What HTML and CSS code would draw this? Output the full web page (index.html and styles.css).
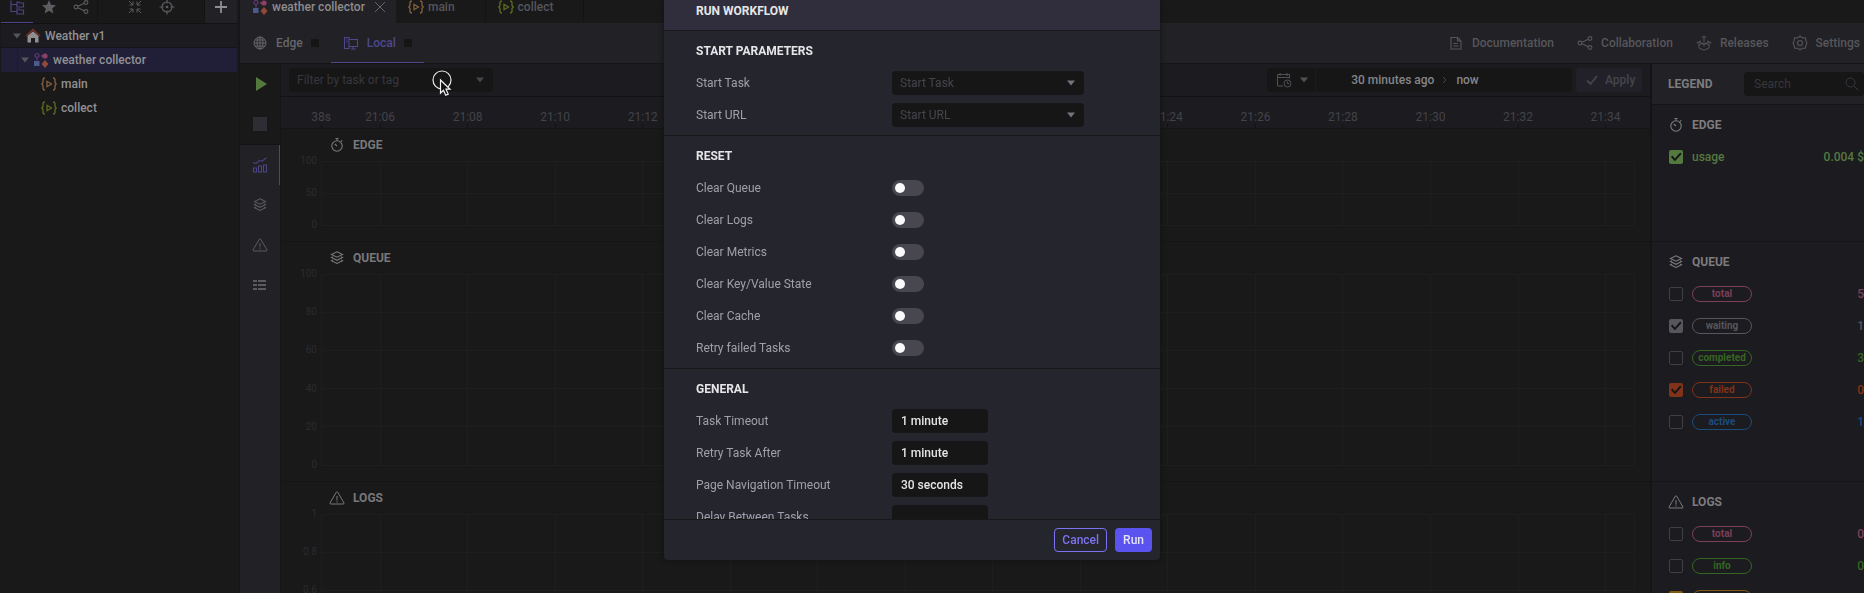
FILE: index.html
```html
<!DOCTYPE html>
<html lang="en">
<head>
<meta charset="utf-8">
<title>Weather v1 – weather collector</title>
<link rel="stylesheet" href="styles.css">
</head>
<body>
<svg class="defs" aria-hidden="true">
  <symbol id="i-flow" viewBox="0 0 16 16">
    <circle cx="4" cy="3.500" r="2" fill="none" stroke="#603a74" stroke-width="1.200"/>
    <path d="M4 5.500v3" stroke="#603a74" stroke-width="1.200"/>
    <path d="M8 4h3" stroke="#8a4068" stroke-width="1.200"/>
    <circle cx="12" cy="4" r="2.600" fill="#8a4068"/>
    <path d="M1 9h5.500v5H1z" fill="#4a5a8c"/>
    <path d="M12 8l3.500 4-3.500 4-3.500-4z" fill="#92493a"/>
  </symbol>
  <symbol id="i-code" viewBox="0 0 16 14">
    <path d="M4 1Q2 1 2 3v2.500L.8 7 2 8.500V11q0 2 2 2M12 1q2 0 2 2v2.500L15.200 7 14 8.500V11q0 2-2 2M6 4.300v5.400L10.500 7z" fill="none" stroke="currentColor" stroke-width="1.300"/>
  </symbol>
  <symbol id="i-share" viewBox="0 0 16 16">
    <g fill="none" stroke="currentColor" stroke-width="1.100"><circle cx="3" cy="8" r="1.900"/><circle cx="13" cy="3.500" r="1.900"/><circle cx="13" cy="12.500" r="1.900"/><path d="M5 7.200l6.200-2.900M5 8.800l6.200 2.900"/></g>
  </symbol>
  <symbol id="i-watch" viewBox="0 0 16 16">
    <g fill="none" stroke="currentColor" stroke-width="1.100"><circle cx="8" cy="9" r="5.200"/><path d="M6.500 1.500h3M8 1.500v2.300M12 4.500l1.300-1.200M8 9L5.800 7"/></g>
  </symbol>
  <symbol id="i-stack" viewBox="0 0 16 16">
    <path d="M8 1.800l5.500 2.700L8 7.200 2.500 4.500zM4 6.800l-1.500.8L8 10.300l5.500-2.700-1.500-.8M4 9.900l-1.500.8L8 13.400l5.500-2.700-1.500-.8" fill="none" stroke="currentColor" stroke-width="1.100"/>
  </symbol>
  <symbol id="i-warn" viewBox="0 0 16 16">
    <path d="M7.300 2.200Q8 1.300 8.700 2.200L15 13q.2 1-.8 1H1.800q-1 0-.8-1zM8 6v4.500M8 11.300v1.200" fill="none" stroke="currentColor" stroke-width="1"/>
  </symbol>
  <symbol id="i-caret" viewBox="0 0 8 6"><path d="M0 .5h8L4 5.500z" fill="currentColor"/></symbol>
</svg>

<div class="app">
  <aside class="sidebar">
    <div class="side-tools">
      <button class="tool tool-active" aria-label="Tree"><svg class="icon" viewBox="0 0 16 16"><path d="M2 1.500v11h6M2 5.500h6M8 3h2l1 1h3.500v4H8zM8 10h2l1 1h3.500v4H8z" fill="none" stroke="currentColor" stroke-width="1.200"/></svg></button>
      <button class="tool" aria-label="Favourites"><svg class="icon" viewBox="0 0 16 16"><path d="M8 1l2 4.800 5 .4-3.800 3.300 1.200 5L8 11.800 3.600 14.500l1.200-5L1 6.200l5-.4z" fill="currentColor"/></svg></button>
      <button class="tool" aria-label="Share"><svg class="icon"><use href="#i-share"/></svg></button>
      <div class="tool-group">
        <button class="tool" aria-label="Collapse"><svg class="icon" viewBox="0 0 16 16"><path d="M2 2l4 4M6 2.500V6H2.500M14 2l-4 4M10 2.500V6h3.500M2 14l4-4M2.500 10H6v3.500M14 14l-4-4M13.500 10H10v3.500" fill="none" stroke="currentColor"/></svg></button>
        <button class="tool" aria-label="Locate"><svg class="icon" viewBox="0 0 16 16"><g fill="none" stroke="currentColor" stroke-width="1.200"><circle cx="8" cy="8" r="5"/><path d="M8 .5v4M8 11.500v4M.5 8h4M11.500 8h4"/></g><circle cx="8" cy="8" r="1.300" fill="currentColor"/></svg></button>
      </div>
      <button class="tool tool-add" aria-label="Add"><svg class="icon" viewBox="0 0 16 16"><path d="M8 2v12M2 8h12" stroke="currentColor" stroke-width="1.800"/></svg></button>
    </div>
    <ul class="tree">
      <li class="node node-root"><svg class="caret"><use href="#i-caret"/></svg><svg class="icon" viewBox="0 0 16 16"><path d="M2.500 8L8 3.200 13.500 8v6.500H10V10H6v4.500H2.500z" fill="#8f8f91"/><path d="M1 8l7-6.500L15 8" fill="none" stroke="#7a3426" stroke-width="1.400"/></svg>Weather v1</li>
      <li class="node node-selected"><svg class="caret"><use href="#i-caret"/></svg><svg class="icon"><use href="#i-flow"/></svg>weather collector</li>
      <li class="node node-leaf"><svg class="icon orange"><use href="#i-code"/></svg>main</li>
      <li class="node node-leaf"><svg class="icon olive"><use href="#i-code"/></svg>collect</li>
    </ul>
  </aside>

  <main class="workspace">
    <nav class="tabs">
      <button class="tab tab-active"><svg class="icon"><use href="#i-flow"/></svg>weather collector<svg class="icon close" viewBox="0 0 16 16"><path d="M3 3l10 10M13 3L3 13" stroke="currentColor"/></svg></button>
      <button class="tab"><svg class="icon orange"><use href="#i-code"/></svg>main</button>
      <button class="tab"><svg class="icon olive"><use href="#i-code"/></svg>collect</button>
    </nav>
    <div class="subbar">
      <button class="env"><svg class="icon" viewBox="0 0 16 16"><g fill="none" stroke="currentColor"><circle cx="8" cy="8" r="6"/><ellipse cx="8" cy="8" rx="3" ry="6"/><path d="M8 2v12M2 8h12M3 5h10M3 11h10"/></g></svg>Edge<i class="dot"></i></button>
      <button class="env env-active"><svg class="icon" viewBox="0 0 16 16"><path d="M1.500 2.500h4.500v11H1.500zM3 5h1.500M3 7h1.500M6 4.500h8.500v7H6M10 11.500v2.500M8 14h5" fill="none" stroke="currentColor" stroke-width="1.100"/></svg>Local<i class="dot"></i></button>
      <div class="links">
        <a class="link" href="#docs"><svg class="icon" viewBox="0 0 16 16"><path d="M3 2.500h6.500L13 6v8H3zM9.500 2.500V6H13M5.500 8.500h4M5.500 11h5" fill="none" stroke="currentColor" stroke-width="1.100"/></svg>Documentation</a>
        <a class="link" href="#collab"><svg class="icon"><use href="#i-share"/></svg>Collaboration</a>
        <a class="link" href="#releases"><svg class="icon" viewBox="0 0 16 16"><path d="M8 7V1M5.700 3L8 .8 10.300 3M5 6L1 7.500l2 2 5-1.500 5 1.500 2-2L11 6M3 9.500v3.500l5 2.300 5-2.300V9.500M3 7l5 2.500L13 7M8 9.500v2" fill="none" stroke="currentColor"/></svg>Releases</a>
        <a class="link" href="#settings"><svg class="icon" viewBox="0 0 16 16"><path d="M8 1l2 1.800 3.300.1.700 3L15 8l-1 2.100-.7 3-3.300.1L8 15l-2-1.800-3.300-.1-.7-3L1 8l1-2.100.7-3L6 2.800z" fill="none" stroke="currentColor" stroke-width="1.100"/><circle cx="8" cy="8" r="2.500" fill="none" stroke="currentColor" stroke-width="1.100"/></svg>Settings</a>
      </div>
    </div>

    <div class="content">
      <div class="rail">
        <div class="rail-run">
          <button class="rail-btn green" aria-label="Run"><svg class="icon" viewBox="0 0 16 16"><path d="M4 1l11 7-11 7z" fill="currentColor"/></svg></button>
          <button class="rail-btn stop" aria-label="Stop"><svg class="icon" viewBox="0 0 16 16"><path d="M1 1h14v14H1z" fill="currentColor"/></svg></button>
        </div>
        <button class="rail-btn rail-active" aria-label="Charts"><svg class="icon" viewBox="0 0 16 16"><path d="M1.500 11h3v4h-3zM6.500 9h3v6h-3zM11.500 8h3v7h-3zM1 5.500l3 1 3.500-3L10 4.200 14.500.8" fill="none" stroke="currentColor" stroke-width="1.100"/></svg></button>
        <button class="rail-btn" aria-label="Queue"><svg class="icon"><use href="#i-stack"/></svg></button>
        <button class="rail-btn" aria-label="Logs"><svg class="icon"><use href="#i-warn"/></svg></button>
        <button class="rail-btn" aria-label="List"><svg class="icon" viewBox="0 0 16 16"><path d="M1 4h4M6 4h8M1 8h4M6 8h8M1 12h4M6 12h8" stroke="currentColor" stroke-width="2"/></svg></button>
      </div>

      <section class="charts">
        <div class="filterbar">
          <label class="filter"><input class="filter-input" type="text" placeholder="Filter by task or tag" aria-label="Filter by task or tag"><svg class="caret"><use href="#i-caret"/></svg>
            <svg class="cursor" viewBox="0 0 24 30"><circle cx="11" cy="11" r="9" fill="none" stroke="#e8e8e8" stroke-width="1.200"/><path d="M9.500 11v13l3-2.800 2.200 5 2.500-1.100-2.200-4.900h4z" fill="#111" stroke="#f4f4f4" stroke-width="1.200"/></svg>
          </label>
          <div class="range">
            <button class="range-pick" aria-label="Pick range"><svg class="icon" viewBox="0 0 16 16"><path d="M7 14H1.500V2.500h12v4M1.500 5.500h12M4 1v3M11 1v3" fill="none" stroke="currentColor"/><circle cx="11.500" cy="11.500" r="3.500" fill="none" stroke="currentColor"/><path d="M11.500 9.500v2h1.800" fill="none" stroke="currentColor"/></svg><svg class="caret"><use href="#i-caret"/></svg></button>
            <button class="range-text">30 minutes ago<svg class="chev" viewBox="0 0 6 8"><path d="M1 1l3 3-3 3" fill="none" stroke="currentColor"/></svg>now</button>
          </div>
          <button class="apply"><svg class="icon" viewBox="0 0 16 16"><path d="M3 8.500l3.500 3.500L13 4" fill="none" stroke="currentColor" stroke-width="1.800"/></svg>Apply</button>
        </div>
        <svg class="axis">
          <g class="axis-ticks">
            <line x1="0" x2="0" y1="27" y2="31"/><line x1="4.500%" x2="4.500%" y1="27" y2="31"/><line x1="11.170%" x2="11.170%" y1="27" y2="31"/><line x1="17.830%" x2="17.830%" y1="27" y2="31"/><line x1="24.500%" x2="24.500%" y1="27" y2="31"/><line x1="64.500%" x2="64.500%" y1="27" y2="31"/><line x1="71.170%" x2="71.170%" y1="27" y2="31"/><line x1="77.830%" x2="77.830%" y1="27" y2="31"/><line x1="84.500%" x2="84.500%" y1="27" y2="31"/><line x1="91.170%" x2="91.170%" y1="27" y2="31"/><line x1="97.830%" x2="97.830%" y1="27" y2="31"/>
          </g>
          <g class="axis-text">
            <text x="0" y="24">38s</text><text x="4.500%" y="24">21:06</text><text x="11.170%" y="24">21:08</text><text x="17.830%" y="24">21:10</text><text x="24.500%" y="24">21:12</text><text x="64.500%" y="24">21:24</text><text x="71.170%" y="24">21:26</text><text x="77.830%" y="24">21:28</text><text x="84.500%" y="24">21:30</text><text x="91.170%" y="24">21:32</text><text x="97.830%" y="24">21:34</text>
          </g>
        </svg>

        <article class="chart">
          <h2 class="chart-title"><svg class="icon"><use href="#i-watch"/></svg>EDGE</h2>
          <div class="plot plot-short">
            <div class="scale"><span>100</span><span>50</span><span>0</span></div>
            <svg class="grid"><g id="cols"><line x1="0" x2="0" y2="100%"/><line x1="4.500%" x2="4.500%" y2="100%"/><line x1="11.170%" x2="11.170%" y2="100%"/><line x1="17.830%" x2="17.830%" y2="100%"/><line x1="24.500%" x2="24.500%" y2="100%"/><line x1="31.170%" x2="31.170%" y2="100%"/><line x1="37.830%" x2="37.830%" y2="100%"/><line x1="44.500%" x2="44.500%" y2="100%"/><line x1="51.170%" x2="51.170%" y2="100%"/><line x1="57.830%" x2="57.830%" y2="100%"/><line x1="64.500%" x2="64.500%" y2="100%"/><line x1="71.170%" x2="71.170%" y2="100%"/><line x1="77.830%" x2="77.830%" y2="100%"/><line x1="84.500%" x2="84.500%" y2="100%"/><line x1="91.170%" x2="91.170%" y2="100%"/><line x1="97.830%" x2="97.830%" y2="100%"/><line x1="100%" x2="100%" y2="100%"/></g>
              <line x2="100%" y1="0" y2="0"/><line x2="100%" y1="50%" y2="50%"/><line x2="100%" y1="100%" y2="100%"/></svg>
          </div>
        </article>
        <article class="chart">
          <h2 class="chart-title"><svg class="icon"><use href="#i-stack"/></svg>QUEUE</h2>
          <div class="plot">
            <div class="scale"><span>100</span><span>80</span><span>60</span><span>40</span><span>20</span><span>0</span></div>
            <svg class="grid"><use href="#cols"/><g id="rows"><line x2="100%" y1="0" y2="0"/><line x2="100%" y1="20%" y2="20%"/><line x2="100%" y1="40%" y2="40%"/><line x2="100%" y1="60%" y2="60%"/><line x2="100%" y1="80%" y2="80%"/><line x2="100%" y1="100%" y2="100%"/></g></svg>
          </div>
        </article>
        <article class="chart">
          <h2 class="chart-title"><svg class="icon"><use href="#i-warn"/></svg>LOGS</h2>
          <div class="plot">
            <div class="scale"><span>1</span><span>0.8</span><span>0.6</span><span>0.4</span><span>0.2</span><span>0</span></div>
            <svg class="grid"><use href="#cols"/><use href="#rows"/></svg>
          </div>
        </article>
      </section>

      <aside class="legend">
        <header class="legend-head"><h2 class="legend-title">LEGEND</h2><label class="search"><input class="search-input" type="search" placeholder="Search" aria-label="Search"><svg class="icon" viewBox="0 0 16 16"><circle cx="6.500" cy="6.500" r="4.500" fill="none" stroke="currentColor"/><path d="M10 10l4.500 4.500" stroke="currentColor"/></svg></label></header>
        <section class="group group-short">
          <h3 class="group-title"><svg class="icon"><use href="#i-watch"/></svg>EDGE</h3>
          <label class="entry green"><input class="check" type="checkbox" checked><span>usage</span><output class="value">0.004 $</output></label>
        </section>
        <section class="group">
          <h3 class="group-title"><svg class="icon"><use href="#i-stack"/></svg>QUEUE</h3>
          <label class="entry pink"><input class="check" type="checkbox"><span class="pill">total</span><output class="value">5</output></label>
          <label class="entry gray"><input class="check" type="checkbox" checked><span class="pill">waiting</span><output class="value">1</output></label>
          <label class="entry leaf"><input class="check" type="checkbox"><span class="pill">completed</span><output class="value">3</output></label>
          <label class="entry red"><input class="check" type="checkbox" checked><span class="pill">failed</span><output class="value">0</output></label>
          <label class="entry blue"><input class="check" type="checkbox"><span class="pill">active</span><output class="value">1</output></label>
        </section>
        <section class="group">
          <h3 class="group-title"><svg class="icon"><use href="#i-warn"/></svg>LOGS</h3>
          <label class="entry pink"><input class="check" type="checkbox"><span class="pill">total</span><output class="value">0</output></label>
          <label class="entry leaf"><input class="check" type="checkbox"><span class="pill">info</span><output class="value">0</output></label>
          <label class="entry amber"><input class="check" type="checkbox" checked><span class="pill">warning</span><output class="value">0</output></label>
        </section>
      </aside>
    </div>
  </main>
</div>

<div class="overlay">
  <form class="modal" role="dialog" aria-labelledby="modal-title">
    <h1 class="modal-head" id="modal-title">RUN WORKFLOW</h1>
    <div class="modal-body">
      <fieldset class="block">
        <h2 class="block-title">START PARAMETERS</h2>
        <div class="field"><label for="task">Start Task</label><span class="select-wrap"><select class="select" id="task"><option>Start Task</option></select><svg class="caret"><use href="#i-caret"/></svg></span></div>
        <div class="field"><label for="url">Start URL</label><span class="select-wrap"><select class="select" id="url"><option>Start URL</option></select><svg class="caret"><use href="#i-caret"/></svg></span></div>
      </fieldset>
      <fieldset class="block">
        <h2 class="block-title">RESET</h2>
        <div class="field"><label for="r1">Clear Queue</label><input class="switch" type="checkbox" role="switch" id="r1"></div>
        <div class="field"><label for="r2">Clear Logs</label><input class="switch" type="checkbox" role="switch" id="r2"></div>
        <div class="field"><label for="r3">Clear Metrics</label><input class="switch" type="checkbox" role="switch" id="r3"></div>
        <div class="field"><label for="r4">Clear Key/Value State</label><input class="switch" type="checkbox" role="switch" id="r4"></div>
        <div class="field"><label for="r5">Clear Cache</label><input class="switch" type="checkbox" role="switch" id="r5"></div>
        <div class="field"><label for="r6">Retry failed Tasks</label><input class="switch" type="checkbox" role="switch" id="r6"></div>
      </fieldset>
      <fieldset class="block">
        <h2 class="block-title">GENERAL</h2>
        <div class="field"><label for="g1">Task Timeout</label><input class="text" type="text" id="g1" value="1 minute"></div>
        <div class="field"><label for="g2">Retry Task After</label><input class="text" type="text" id="g2" value="1 minute"></div>
        <div class="field"><label for="g3">Page Navigation Timeout</label><input class="text" type="text" id="g3" value="30 seconds"></div>
        <div class="field"><label for="g4">Delay Between Tasks</label><input class="text" type="text" id="g4"></div>
      </fieldset>
    </div>
    <footer class="modal-foot"><button class="btn btn-outline" type="button">Cancel</button><button class="btn btn-solid" type="submit">Run</button></footer>
  </form>
</div>
</body>
</html>
```
FILE: styles.css
```css
* { box-sizing: border-box; }
html, body { height: 100%; }
body {
  margin: 0;
  overflow: hidden;
  background: #151516;
  color: #919194;
  font: 500 12px/16px Roboto, sans-serif;
}
button, input, select { font: inherit; color: inherit; border: 0; margin: 0; padding: 0; background: none; outline: 0; }
h1, h2, h3, ul, fieldset { margin: 0; padding: 0; border: 0; font: inherit; list-style: none; min-width: 0; }
.defs { position: absolute; width: 0; height: 0; }
.icon { width: 16px; height: 16px; flex: none; }
.caret { width: 8px; height: 6px; flex: none; }

.green { color: #54793f; }
.pink { color: #7b4058; }
.gray { color: #56565c; }
.leaf { color: #366523; }
.red { color: #81331a; }
.blue { color: #1b4c7d; }
.amber { color: #80590f; }
.orange { color: #85613f; }
.olive { color: #5f6c20; }

.app { display: flex; height: 100%; overflow: hidden; }

/* Sidebar */
.sidebar { width: 240px; flex: none; padding: 0 2px 0 1px; background: #19191a; border-right: 1px solid #151516; }
.side-tools { display: flex; height: 24px; border-bottom: 1px solid #121213; color: #5c5c61; }
.tool { width: 32px; height: 23px; padding-bottom: 9px; display: flex; align-items: center; justify-content: center; }
.tool-active { color: #4b4486; border-bottom: 1px solid #4b4486; padding-bottom: 8px; }
.tool-group { flex: 1; display: flex; justify-content: center; border: solid #131314; border-width: 0 1px; }
.tool-add { background: #222126; color: #8f8f92; }
.node { height: 24px; display: flex; align-items: center; gap: 4px; }
.node .caret { color: #55555a; }
.node-root { padding-left: 12px; background: #1c1b1f; border-bottom: 1px solid #151516; }
.node-selected { padding-left: 20px; background: linear-gradient(90deg, transparent 16px, #1b1a2c 16px, #1b1a2c 17px, transparent 17px), #211f38; }
.node-leaf { padding-left: 40px; }

/* Top bars */
.workspace { flex: 1; min-width: 0; display: flex; flex-direction: column; }
.tabs { display: flex; height: 23px; flex: none; background: #19191a; }
.tab { display: flex; align-items: center; gap: 4px; padding: 0 30px 9px 12px; height: 22px; border-right: 1px solid #131314; color: #55555a; }
.tab-active { background: #222126; color: #8c8c8f; height: 23px; padding: 0 12px 10px; border: 0; }
.close { margin-left: 3px; margin-right: -4px; color: #66666a; }
.subbar { display: flex; height: 41px; flex: none; background: #222126; border-bottom: 1px solid #151516; color: #66666b; }
.env { display: flex; align-items: center; gap: 8px; padding: 0 12px; border-bottom: 1px solid transparent; }
.env-active { color: #4e478c; border-color: #4e478c; }
.dot { width: 8px; height: 8px; background: #151516; }
.links { margin-left: auto; display: flex; align-items: center; gap: 23px; padding-right: 4px; color: #56565b; }
.link { display: flex; align-items: center; gap: 8px; color: inherit; text-decoration: none; }

/* Content */
.content { flex: 1; display: flex; min-height: 0; }
.rail { width: 41px; flex: none; background: #222126; border-right: 1px solid #151516; color: #5a5a5f; }
.rail-run { background: #19191a; border-bottom: 1px solid #131314; }
.rail-btn { width: 100%; height: 40px; display: flex; align-items: center; justify-content: center; }
.rail-btn.green { color: #54793f; }
.stop { color: #2d2d33; }
.rail-active { color: #4b4486; border-right: 1px solid #4b4486; }
.charts { flex: 1; min-width: 0; background: #19191a; border-right: 2px solid #141415; overflow: hidden; }
.filterbar { display: flex; gap: 4px; height: 33px; padding: 4px 8px; background: #1c1b1f; border-bottom: 1px solid #131314; }
.filter { position: relative; display: flex; align-items: center; width: 204px; height: 24px; padding: 0 9px 0 8px; border-radius: 4px; background: #161616; color: #45454b; }
.filter-input { flex: 1; min-width: 0; }
.filter-input, .search-input { font-weight: 400; }
::placeholder { color: #37373d; opacity: 1; }
.cursor { position: absolute; left: 142px; top: 1px; width: 24px; height: 30px; }
.range { margin-left: auto; display: flex; gap: 1px; width: 305px; height: 24px; }
.range-pick { display: flex; align-items: center; gap: 8px; width: 48px; padding-left: 9px; border-radius: 4px 0 0 4px; background: #161616; color: #505056; }
.range-text { flex: 1; display: flex; align-items: center; justify-content: center; gap: 8px; padding-right: 58px; border-radius: 0 4px 4px 0; background: #161616; color: #85858a; }
.chev { width: 6px; height: 8px; color: #45454a; }
.apply { display: flex; align-items: center; gap: 5px; width: 66px; height: 24px; padding-left: 8px; border-radius: 4px; background: #222129; color: #45454b; }
.axis { display: block; width: 100%; height: 32px; padding: 0 16px 0 40px; background: #1c1b1f; border-bottom: 1px solid #151516; overflow: visible; }
.axis-ticks { stroke: #121213; shape-rendering: crispEdges; }
.axis-text { fill: #434349; font-weight: 400; text-anchor: middle; }
.chart { border-bottom: 1px solid #151516; }
.chart-title { display: flex; align-items: center; gap: 8px; height: 32px; padding-left: 48px; font-weight: 700; color: #78787b; }
.plot { display: flex; height: 207px; padding: 0 16px 16px 0; }
.plot-short { height: 80px; }
.scale { width: 40px; flex: none; display: flex; flex-direction: column; justify-content: space-between; padding-right: 4px; text-align: right; font-size: 10px; font-weight: 400; line-height: 0; color: #2b2b2f; }
.grid { flex: 1; min-width: 0; height: 100%; overflow: visible; stroke: #1e1e20; shape-rendering: crispEdges; }

/* Legend */
.legend { width: 212px; flex: none; background: #1c1b1f; overflow: hidden; }
.legend-head { display: flex; align-items: center; justify-content: space-between; height: 41px; padding-left: 16px; background: #222126; border-bottom: 1px solid #151516; }
.legend-title, .group-title { font-weight: 700; color: #7c7c7f; }
.search { display: flex; align-items: center; width: 120px; height: 24px; padding: 0 4px 0 10px; border-radius: 4px; background: #161616; color: #37373d; }
.search-input { flex: 1; min-width: 0; appearance: none; }
.group { min-height: 240px; padding: 4px 0 0 16px; border-bottom: 1px solid #151516; }
.group-short { min-height: 137px; }
.group-title, .entry { display: flex; align-items: center; gap: 8px; height: 32px; }
.check { appearance: none; width: 14px; height: 14px; margin: 0 1px; flex: none; border: 1px solid #3e3e43; border-radius: 2px; }
.check:checked { border: 0; background: currentColor; }
.check:checked::before { content: ""; display: block; width: 14px; height: 14px; background: #151516; clip-path: polygon(14% 50%, 24% 40%, 42% 60%, 80% 18%, 90% 28%, 42% 80%); }
.pill { width: 60px; height: 16px; border: 1px solid currentColor; border-radius: 8px; text-align: center; font-size: 10px; font-weight: 700; line-height: 14px; }
.value { margin-left: auto; }

/* Dialog */
.overlay { position: fixed; inset: 0; display: flex; justify-content: center; align-items: flex-start; padding-right: 40px; }
.modal { display: flex; flex-direction: column; width: 496px; max-height: calc(100vh - 33px); background: #25252e; border-radius: 0 0 4px 4px; box-shadow: 0 0 5px #111; color: #a0a0ab; }
.modal-head { flex: none; height: 31px; padding: 3px 32px 0; background: #302e3c; border-bottom: 1px solid #18181a; font-weight: 700; color: #e6e6e8; }
.modal-body { flex: 1; min-height: 0; overflow: hidden; }
.block { padding: 4px 32px; border-bottom: 1px solid #18181a; }
.block-title { height: 32px; line-height: 32px; font-weight: 700; color: #e6e6e8; }
.field { display: grid; grid-template-columns: 196px 1fr; align-items: center; height: 32px; font-weight: 400; }
.select-wrap { position: relative; width: 192px; height: 24px; }
.select { appearance: none; width: 100%; height: 24px; padding: 0 8px; border-radius: 4px; background: #161616; color: #45454e; }
.select-wrap .caret { position: absolute; right: 9px; top: 9px; color: #73737d; }
.switch { appearance: none; width: 32px; height: 16px; padding: 3px; border-radius: 8px; background: #474651; }
.switch::before { content: ""; display: block; width: 10px; height: 10px; border-radius: 50%; background: #fafafa; }
.text { width: 96px; height: 24px; padding: 0 9px; border-radius: 4px; background: #161616; color: #e4e4e6; font-weight: 500; }
.modal-foot { flex: none; display: flex; justify-content: flex-end; gap: 8px; padding: 8px; border-top: 1px solid #18181a; }
.btn { height: 24px; padding: 0 8px; border-radius: 4px; }
.btn-outline { padding: 0 7px; border: 1px solid #7d73f0; color: #7d73f0; }
.btn-solid { background: #5b53f0; color: #e4e2fb; }
```
